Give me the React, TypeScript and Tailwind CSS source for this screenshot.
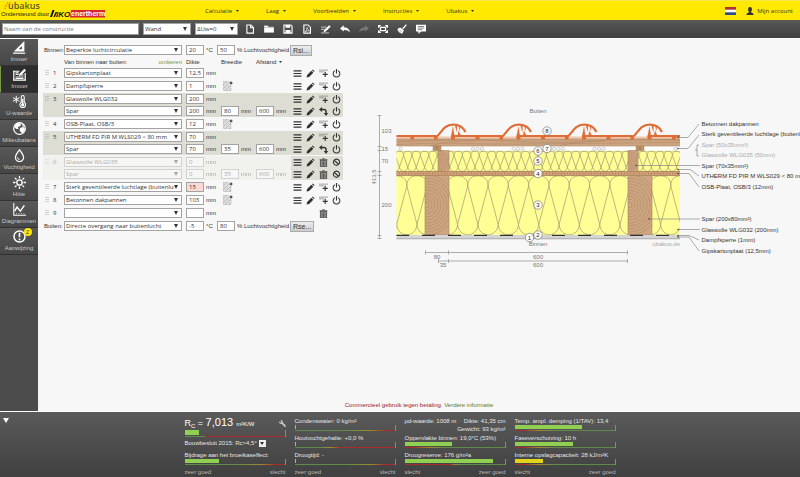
import type { ReactNode } from 'react'
import { FaWrench } from 'react-icons/fa'

type Row = {
  name: string
  thickness: string
  width?: string
  spacing?: string
  hatch?: boolean
  warn?: boolean
  tools: string[]
}

type Layer = { nr: number; rows: Row[]; inactive?: boolean }

const layerTools = ['menu', 'pencil', 'add', 'power']
const beamTools = ['menu', 'pencil', 'swap', 'power']
const offTools = ['menu', 'pencil', 'trash', 'ban']

const layers: Layer[] = [
  { nr: 1, rows: [{ name: 'Gipskartonplaat', thickness: '12,5', tools: layerTools }] },
  { nr: 2, rows: [{ name: 'Dampfsperre', thickness: '1', hatch: true, tools: layerTools }] },
  {
    nr: 3,
    rows: [
      { name: 'Glaswolle WLG032', thickness: '200', tools: layerTools },
      { name: 'Spar', thickness: '200', width: '80', spacing: '600', tools: beamTools },
    ],
  },
  { nr: 4, rows: [{ name: 'OSB-Plaat, OSB/3', thickness: '12', hatch: true, tools: layerTools }] },
  {
    nr: 5,
    rows: [
      { name: 'UTHERM FD PIR M WLS029 < 80 mm', thickness: '70', tools: layerTools },
      { name: 'Spar', thickness: '70', width: '35', spacing: '600', tools: beamTools },
    ],
  },
  {
    nr: 6,
    inactive: true,
    rows: [
      { name: 'Glaswolle WLG035', thickness: '0', tools: offTools },
      { name: 'Spar', thickness: '0', width: '35', spacing: '600', tools: offTools },
    ],
  },
  {
    nr: 7,
    rows: [{ name: 'Sterk geventileerde luchtlage (buitenlucht)', thickness: '15', hatch: true, warn: true, tools: layerTools }],
  },
  { nr: 8, rows: [{ name: 'Betonnen dakpannen', thickness: '103', hatch: true, tools: layerTools }] },
  { nr: 9, rows: [{ name: '', thickness: '', tools: ['', '', 'trash', ''] }] },
]

const icons: Record<string, ReactNode> = {
  menu: <path d="M1 3.5h14M1 8h14M1 12.5h14" stroke="currentColor" strokeWidth="2.2" />,
  pencil: <path d="M1 15l1-4.5L9.5 3l3.5 3.5L5.5 14zM10.5 2l1.500-1.300L15.300 4 14 5.500z" fill="currentColor" />,
  add: (
    <>
      <path d="M0 2h16M0 5h9" stroke="#888" strokeWidth="1.4" />
      <path d="M11 5v9M6.5 9.5h9" stroke="currentColor" strokeWidth="2" />
    </>
  ),
  power: (
    <>
      <path d="M5 3.2a6 6 0 1 0 6 0" fill="none" stroke="currentColor" strokeWidth="1.8" />
      <path d="M8 0v8" stroke="currentColor" strokeWidth="2" />
    </>
  ),
  swap: (
    <>
      <path d="M4 4.5h5q3.5 0 3.5 3.5v3" fill="none" stroke="currentColor" strokeWidth="2.6" />
      <path d="M0 4.5L5.5 0v9zM12.5 16L8.5 10.5h8z" fill="currentColor" />
    </>
  ),
  trash: (
    <>
      <path d="M2.5 4h11v11.5h-11z" fill="#aaa" stroke="currentColor" strokeWidth="1.4" />
      <path d="M1 3h14M6 1h4M5.5 6v8M8 6v8M10.5 6v8" stroke="currentColor" strokeWidth="1.2" />
    </>
  ),
  ban: <path d="M8 2a5.5 5.5 0 1 0 .01 0M4 4l8 7.5" fill="none" stroke="currentColor" strokeWidth="2" />,
  file: <path d="M3 1.5h6.5L13.5 5.5v9H3zM9 1.5V6h4.5" fill="none" stroke="currentColor" strokeWidth="1.8" />,
  folder: <path d="M0 2.5h6l1.5 2H16V14H0zM0 5.5h16" fill="currentColor" stroke="#555" strokeWidth=".5" />,
  save: (
    <>
      <path d="M1.5 1.5h11l2 2v11h-13z" fill="none" stroke="currentColor" strokeWidth="1.8" />
      <path d="M4 1.5h7.5V6H4zM4 9.5h8v5H4z" fill="currentColor" />
    </>
  ),
  pdf: (
    <>
      <path d="M3 1.5h6.5L13.5 5.5v9H3z" fill="none" stroke="currentColor" strokeWidth="1.8" />
      <path d="M5 12.5q3-3 3-7 1 4 4 5.5-4-.5-7 1.5z" fill="none" stroke="currentColor" />
    </>
  ),
  edit: (
    <>
      <path d="M0 5h9M0 8.5h6M0 14h13" stroke="#aaa" strokeWidth="2" />
      <path d="M4 13l1-3.5L13 2l2.5 2.5L7.5 12z" fill="currentColor" />
    </>
  ),
  undo: <path d="M0 7l6-5v3q8 0 10 8-4-4-10-3.5V12z" fill="currentColor" />,
  redo: <path d="M16 7l-6-5v3Q2 5 0 13q4-4 10-3.5V12z" fill="#777" />,
  fit: (
    <>
      <path d="M0 1.5h5L1.5 6H0zM16 1.5h-5L14.5 6H16zM0 14.5h5L1.5 10H0zM16 14.5h-5l3.5-4.5H16z" fill="currentColor" />
      <path d="M4 5.5h8v5H4z" fill="none" stroke="currentColor" strokeWidth="2" />
    </>
  ),
  brush: (
    <>
      <path d="M15 1L9 8" stroke="currentColor" strokeWidth="2" />
      <path d="M1 7.5L5 5.500l6 5-2.500 4.500H6l-1-2-1 1.500-1-3-1.500.5z" fill="currentColor" />
      <path d="M4 9.500l3 3" stroke="#555" />
    </>
  ),
  comment: (
    <>
      <path d="M0 1h16v11H8l-4 4v-4H0z" fill="currentColor" />
      <path d="M3 4h10M3 6.5h10M3 9h7" stroke="#555" strokeWidth="1.1" />
    </>
  ),
  user: <path d="M8 0q4 0 4 4.500Q12 8 10 9.500v1q5 1 5.500 5.500H.5Q1 11.500 6 10.500v-1Q4 8 4 4.500 4 0 8 0z" fill="currentColor" />,
  square: (
    <>
      <path d="M14 0v13H1z" fill="currentColor" />
      <path d="M11 6v4H7z" fill="#4c4c4c" />
      <path d="M0 15h15" stroke="currentColor" strokeWidth="1.5" />
    </>
  ),
  input: (
    <>
      <path d="M0 4h8M0 15h16M1 4v11M15 6v9" stroke="currentColor" strokeWidth="1.5" />
      <path d="M3 8h4M3 11h10M3 13h10M3 6h4M10 8.500h3" stroke="currentColor" strokeWidth="1.3" />
      <path d="M7 10l1-3 6-6 2 2-6 6z" fill="currentColor" />
    </>
  ),
  thermo: (
    <>
      <path d="M4 1v9M0 3.3l8 4.5M8 3.3l-8 4.5" stroke="currentColor" strokeWidth="1.2" />
      <path d="M10.2 9V2.5a1.8 1.8 0 0 1 3.6 0V9a3.5 3.5 0 1 1-3.6 0z" fill="none" stroke="currentColor" strokeWidth="1.3" />
      <path d="M12 5v7" stroke="currentColor" strokeWidth="1.6" />
      <circle cx="12" cy="12" r="2" fill="currentColor" />
    </>
  ),
  globe: (
    <>
      <circle cx="8" cy="8" r="7.2" fill="none" stroke="currentColor" strokeWidth="1.5" />
      <path d="M2 4l4-3 4 1-1 3-3 1 1 2-2 1-3-2zM9 7l4-1 2 3-3 5-2-1-2-3zM11 2l3 3-2 1z" fill="currentColor" />
    </>
  ),
  drop: (
    <>
      <path d="M8 1q5 6 5 9.5a5 5 0 0 1-10 0Q3 7 8 1z" fill="none" stroke="currentColor" strokeWidth="1.6" />
      <path d="M5.5 10.5q.5 2.5 2.5 2.5" fill="none" stroke="currentColor" strokeWidth="1.2" />
    </>
  ),
  sun: (
    <>
      <circle cx="8" cy="8" r="3.3" fill="none" stroke="currentColor" strokeWidth="1.7" />
      <path d="M8 0v3M8 13v3M0 8h3M13 8h3M2.3 2.3l2 2M11.7 11.7l2 2M2.3 13.7l2-2M11.7 4.3l2-2" stroke="currentColor" strokeWidth="1.6" />
    </>
  ),
  chart: (
    <>
      <path d="M1 0v15h15" fill="none" stroke="currentColor" strokeWidth="1.3" />
      <path d="M2 10l3-5 4 5 5-7" fill="none" stroke="currentColor" strokeWidth="1.8" />
      <path d="M4 13h11" stroke="currentColor" strokeDasharray="1 2" />
    </>
  ),
  alert: (
    <>
      <circle cx="8" cy="8" r="6.8" fill="none" stroke="currentColor" strokeWidth="1.8" />
      <path d="M8 3.5v5.5M8 10.5v2" stroke="currentColor" strokeWidth="2" />
    </>
  ),
}

function Icon({ name, className }: { name: string; className: string }) {
  return (
    <svg viewBox="0 0 16 16" className={className} aria-hidden="true">
      {icons[name]}
    </svg>
  )
}

function Caret({ className }: { className: string }) {
  return (
    <svg viewBox="0 0 10 8" className={className} aria-hidden="true" preserveAspectRatio="none">
      <path d="M0 0h10L5 8z" fill="currentColor" />
    </svg>
  )
}

function Select({ label, value, className }: { label: string; value: string; className: string }) {
  return (
    <div className={`relative ${className}`}>
      <select
        aria-label={label}
        className="block h-full w-full appearance-none border border-[#a3a3a3] bg-white pl-px pr-[7px] font-['Open_Sans',sans-serif] text-[6px] leading-[8px] text-[#333]"
      >
        <option>{value}</option>
      </select>
      <Caret className="pointer-events-none absolute right-1 top-1/2 h-[4px] w-[4px] -translate-y-1/2 text-[#333]" />
    </div>
  )
}

function NumberBox({ label, value, warn }: { label: string; value: string; warn?: boolean }) {
  return (
    <input
      aria-label={label}
      defaultValue={value}
      className={`block h-[10px] w-[18px] shrink-0 border border-[#a3a3a3] pl-[2px] font-['Open_Sans',sans-serif] text-[6px] leading-[8px] text-[#333] ${
        warn ? 'bg-[#fcd9d5]' : 'bg-white'
      }`}
    />
  )
}

function Measure({ label, value, warn }: { label: string; value: string; warn?: boolean }) {
  return (
    <div className="flex items-center gap-[2px]">
      <NumberBox label={label} value={value} warn={warn} />
      <span>mm</span>
    </div>
  )
}

function Hatch() {
  return (
    <button aria-label="Balken toevoegen" className="ml-[2px] block">
      <svg viewBox="0 0 10 10" className="h-[10px] w-[10px]">
        <rect x="0.5" y="0.5" width="7.5" height="9" fill="#ddd" stroke="#999" strokeWidth=".6" strokeDasharray="1 1" />
        <path d="M0 4l4-4M0 8l8-8M2 10l6-6M6 10l2-2" stroke="#aaa" strokeWidth=".6" />
        <rect x="6" y="0" width="4" height="4" fill="#f7f7f7" />
        <path d="M8 .5v3M6.5 2h3" stroke="#222" />
      </svg>
    </button>
  )
}

function LayerRow({ row, nr, first, inactive }: { row: Row; nr: number; first: boolean; inactive?: boolean }) {
  const fade = inactive ? 'opacity-40' : ''
  return (
    <div className="grid h-[12px] grid-cols-[21px_122px_35px_35px_35px_52px] items-center">
      <div className={`flex items-center gap-[4px] pl-[2px] ${fade}`}>
        {first && (
          <>
            <svg viewBox="0 0 4 6" className="h-[6px] w-[4px]">
              <path d="M1 0v6M3 0v6" stroke="#aaa" strokeDasharray="1 1" />
            </svg>
            <span className="font-['Open_Sans',sans-serif]">{nr}</span>
          </>
        )}
      </div>
      <Select label={`Materiaal laag ${nr}`} value={row.name} className={`h-[10px] w-[118px] ${fade}`} />
      <div className={fade}>
        <Measure label="Dikte" value={row.thickness} warn={row.warn} />
      </div>
      <div className={fade}>
        {row.width && <Measure label="Breedte" value={row.width} />}
        {row.hatch && <Hatch />}
      </div>
      <div className={fade}>{row.spacing && <Measure label="Afstand" value={row.spacing} />}</div>
      <div className={`grid h-full grid-cols-4 items-center justify-items-center ${inactive ? 'bg-[#dfded6]' : ''}`}>
        {row.tools.map((tool, i) =>
          tool ? (
            <button key={i} aria-label={tool}>
              <Icon name={tool} className="h-[9px] w-[9px]" />
            </button>
          ) : (
            <span key={i} />
          ),
        )}
      </div>
    </div>
  )
}

function ClimateRow({ label, value, temp, humidity, button }: Record<string, string>) {
  return (
    <div className="grid h-[12px] grid-cols-[21px_122px_31px_73px_auto] items-center">
      <span className="pl-px">{label}</span>
      <Select label={label} value={value} className="h-[10px] w-[118px]" />
      <div className="flex items-center gap-[2px]">
        <NumberBox label={`${label} temperatuur`} value={temp} />
        <span>°C</span>
      </div>
      <div className="flex items-center gap-[2px]">
        <NumberBox label={`${label} luchtvochtigheid`} value={humidity} />
        <span>% Luchtvochtigheid</span>
      </div>
      <button className="h-[11px] w-fit border border-[#aaa] bg-linear-to-b from-[#eee] to-[#ccc] px-[2px] text-[7px] leading-[9px]">
        {button}
      </button>
    </div>
  )
}

// Rounded top around each x, legs crossing over to the next bottom arc
function loops(from: number, to: number, step: number, top: number, bottom: number) {
  const r = step / 2
  const k = r * 1.35
  let d = ''
  for (let x = from; x <= to; x += step) {
    d += `M${x} ${bottom - r}L${x - r} ${top + r}C${x - r - 1} ${top + r - k} ${x + r + 1} ${top + r - k} ${x + r} ${top + r}`
    d += `L${x} ${bottom - r}C${x - 1} ${bottom - r + k} ${x - step + 1} ${bottom - r + k} ${x - step} ${bottom - r}`
  }
  return d
}

const callouts = [
  { text: 'Betonnen dakpannen', y: 124, line: 'M678 137.5H688L699 124' },
  { text: 'Sterk geventileerde luchtlage (buitenlucht)', y: 134, line: 'M678 148.5H688L699 135' },
  { text: 'Spar (50x35mm²)', y: 145, muted: true, line: 'M699 145h-2v11h2M697 150h-2' },
  { text: 'Glaswolle WLG035 (50mm)', y: 155, muted: true, line: '' },
  { text: 'Spar (70x35mm²)', y: 166, line: 'M636 165.5H700' },
  { text: 'UTHERM FD PIR M WLS029 < 80 mm', y: 176, line: 'M678 169.5H690L699 176' },
  { text: 'OSB-Plaat, OSB/3 (12mm)', y: 187, line: 'M678 173.5H689L699 187' },
  { text: 'Spar (200x80mm²)', y: 219, line: 'M649 219H700' },
  { text: 'Glaswolle WLG032 (200mm)', y: 230, line: 'M678 229.5H700' },
  { text: 'Dampfsperre (1mm)', y: 240, line: 'M678 235.5H689L699 240' },
  { text: 'Gipskartonplaat (12,5mm)', y: 251, line: 'M678 237H689L699 251' },
]

const markers = [
  [529.5, 237.5, 1],
  [538, 235, 2],
  [538, 205, 3],
  [538, 173.5, 4],
  [538, 161, 5],
  [538, 151, 6],
  [547, 148.5, 7],
  [547, 131, 8],
]

function CrossSection() {
  return (
    <svg viewBox="365 95 435 180" className="block h-[180px] w-[435px] shrink-0 font-['Liberation_Sans',Arial,sans-serif] text-[6px]" fill="none">
      <defs>
        <clipPath id="section">
          <rect x="396.5" y="110" width="283.5" height="135" />
        </clipPath>
        <clipPath id="beams">
          <path d="M425 175.5h24V235h-24zM438 150.5h11V171.5h-11zM628 175.5h24V235h-24zM628 150.5h10V171.5h-10z" />
        </clipPath>
      </defs>
      <g clipPath="url(#section)">
        <rect x="396" y="146" width="285" height="5.5" fill="#fff" />
        <rect x="396" y="151" width="285" height="20.5" fill="#ffff96" />
        <rect x="396" y="175.5" width="285" height="59.5" fill="#ffff96" />
        <path d={loops(391, 690, 8.4, 151.3, 171.3)} stroke="#aaa573" strokeWidth=".8" />
        <path d={loops(396.7, 702, 20.3, 175.8, 234.6)} stroke="#aaa573" strokeWidth=".8" />
        <path d="M396 151.3h285" stroke="#b9b578" strokeWidth=".6" />

        {/* osb */}
        <rect x="396" y="171.5" width="285" height="4.2" fill="#d0a078" />
        <path d="M396 171.5h285M396 175.6h285" stroke="#a1764e" strokeWidth=".7" />
        <path d="M396 173.5h285" stroke="#b5855c" strokeWidth="2" strokeDasharray="1 2" />

        {/* beams */}
        <path d="M425 175.5h24V235h-24zM438 150.5h11V171.5h-11zM628 175.5h24V235h-24zM628 150.5h10V171.5h-10z" fill="#cda581" stroke="#a9825e" strokeWidth=".6" />
        <g clipPath="url(#beams)" stroke="#b18a67" strokeWidth=".6">
          {[3, 6, 9, 12, 15, 18, 21, 24, 27, 30].map((r) => (
            <g key={r}>
              <circle cx="426" cy="205" r={r} />
              <circle cx="629" cy="205" r={r} />
            </g>
          ))}
          {[1.5, 3.5, 5.5, 7.5, 9.5].map((r) => (
            <g key={r}>
              <circle cx="440" cy="161" r={r} />
              <circle cx="629" cy="161" r={r} />
            </g>
          ))}
        </g>

        {/* batten */}
        <rect x="396" y="138" width="285" height="8" fill="#cda581" />
        <path d="M396 142q60-4 110-1t90 0 85-1M396 144.5q40-2 70-1t110 0 110-1M430 146q20-6 45-5M560 146q20-6 45-5M396 140h285" stroke="#b18a67" strokeWidth=".6" />
        <path d="M396 146h285" stroke="#a9876a" strokeWidth=".6" />
        <path d="M433 146h8v4.5h-8zM636 146h8v4.5h-8z" fill="#c39668" stroke="#a07c5c" strokeWidth=".5" />
        <circle cx="437" cy="148.5" r="1.3" stroke="#8a6440" strokeWidth=".5" />
        <circle cx="640" cy="148.5" r="1.3" stroke="#8a6440" strokeWidth=".5" />
        {[400.5, 473, 477.5, 482, 513.5, 518, 522.5, 554, 558.5, 563, 594.5, 599, 603.5, 675.5].map((x) => (
          <circle key={x} cx={x} cy="148.8" r="1.6" stroke="#aaa" strokeWidth=".6" />
        ))}

        {/* vapour barrier and plasterboard */}
        <rect x="396" y="235" width="285" height="4" fill="#d3d3d3" />
        <path d="M396 238.8h285" stroke="#999" strokeWidth=".7" />
        <path d="M396 235.4h285" stroke="#333" strokeWidth="1.2" strokeDasharray="13 13" />

        {/* roof tiles */}
        <rect x="396" y="136.5" width="285" height="2" fill="#f3c6ad" />
        <g stroke="#df6c34">
          <path d="M396 136H436" strokeWidth="2" />
          <path d="M410.5 137.5h3.5" strokeWidth="4" />
          {[436, 501.5, 567, 632.5].map((x) => (
            <g key={x}>
              <path d={`M${x - 2} 137.5h3.500`} strokeWidth="4" />
              <path d={`M${x} 137C${x + 5} 134 ${x + 7} 125 ${x + 17} 124.5Q${x + 26} 124.5 ${x + 29.5} 132`} strokeWidth="2.2" />
              <path d={`M${x + 16} 136H${x + 65.5}`} strokeWidth="2" />
              <path d={`M${x + 15} 137.5h4M${x + 39.5} 137.5h4`} strokeWidth="4" />
              <path
                d={`M${x + 15} 137l2-10 1.500 10zM${x + 19} 125.500h2l-.2 6zM${x + 23} 126h1.500l-.8 4.500zM${x + 21.5} 136l1-5 2.500 5z`}
                fill="#df6c34"
                strokeWidth=".3"
              />
            </g>
          ))}
        </g>
      </g>

      {/* dimension lines */}
      <g stroke="#999" strokeWidth=".8">
        <path d="M379.5 115.5V239M377.5 115.5h4M377.5 146.5h4M377.5 150.5h4M377.5 171.5h4M377.5 175.5h4M377.5 235.5h4M377.5 238.5h4" />
        <path d="M425 252.5H628M425.5 250.5v4M448.5 250.5v4M627.5 250.5v4M438 261H628M438.5 259v4M448.5 259v4M627.5 259v4" />
      </g>
      <g fill="#777">
        <text x="381.5" y="133">103</text>
        <text x="381.5" y="151">15</text>
        <text x="381.5" y="163">70</text>
        <text x="381.5" y="207">200</text>
        <text transform="translate(376 177) rotate(-90)" textAnchor="middle">413,5</text>
        <text x="437" y="259" textAnchor="middle">80</text>
        <text x="538" y="259" textAnchor="middle">600</text>
        <text x="443" y="267" textAnchor="middle">35</text>
        <text x="538" y="267" textAnchor="middle">600</text>
        <text x="538" y="113" textAnchor="middle">Buiten</text>
        <text x="538" y="246" textAnchor="middle">Binnen</text>
        <text x="680" y="246" textAnchor="end" fill="#aaa">ubakus.de</text>
      </g>

      {markers.map(([x, y, nr]) => (
        <g key={nr}>
          <circle cx={x} cy={y} r="4.2" fill="#fff" stroke="#777" strokeWidth=".7" />
          <text x={x} y={y + 2} textAnchor="middle" fill="#222">{nr}</text>
        </g>
      ))}

      {callouts.map((c) => (
        <g key={c.text}>
          <path d={c.line} stroke="#888" strokeWidth=".7" />
          {c.line && !c.muted && <circle cx={c.line.slice(1, 4)} cy={c.line.match(/ ([\d.]+)/)?.[1]} r=".8" fill="#444" />}
          <text x="701.5" y={c.y + 2} fill={c.muted ? '#aaa' : '#333'}>{c.text}</text>
        </g>
      ))}
    </svg>
  )
}

const tracks = {
  good: 'bg-linear-to-r from-[#5f8a48] from-50% via-[#a08a2c] via-75% to-[#a82c2c] to-90%',
  early: 'bg-linear-to-r from-[#5f8a48] from-25% via-[#a08a2c] via-35% to-[#a82c2c] to-45%',
  bad: 'bg-linear-to-r from-[#a82c2c] from-10% via-[#a08a2c] via-25% to-[#5f8a48] to-40%',
  badLong: 'bg-linear-to-r from-[#a82c2c] from-45% via-[#a08a2c] via-50% to-[#5f8a48] to-55%',
}

type MeterProps = { label: string; value: number; color?: string; track?: keyof typeof tracks }

function Meter({ label, value, color = 'bg-[#8fd053]', track = 'good' }: MeterProps) {
  return (
    <div className="mb-[3px]">
      <div className="h-[8px] whitespace-nowrap leading-[8px]">{label}</div>
      <div className="flex h-[6px] flex-col justify-end border-r border-[#888]">
        <div className={`h-[4px] ${color}`} style={{ width: `${value}%` }} />
        <div className={`mt-px h-px ${tracks[track]}`} />
      </div>
    </div>
  )
}

function Scale({ left, right }: { left: string; right: string }) {
  return (
    <div className="flex justify-between leading-[8px] text-[#b5b5b5]">
      <span>{left}</span>
      <span>{right}</span>
    </div>
  )
}

const menu = ['Calculatie', 'Laag', 'Voorbeelden', 'Instructies', 'Ubakus']
const toolbar = ['file', 'folder', 'save', 'pdf', 'edit', 'undo', 'redo', 'fit', 'brush', 'comment']
const sidebar = [
  { icon: 'square', label: 'Invoer' },
  { icon: 'input', label: 'Invoer', active: true },
  { icon: 'thermo', label: 'U-waarde' },
  { icon: 'globe', label: 'Milieubalans' },
  { icon: 'drop', label: 'Vochtigheid' },
  { icon: 'sun', label: 'Hitte' },
  { icon: 'chart', label: 'Diagrammen' },
  { icon: 'alert', label: 'Aanwijzing', badge: '2' },
]

export default function App() {
  return (
    <div className="flex min-h-screen flex-col overflow-hidden bg-[#f7f7f7] font-['Liberation_Sans',Arial,sans-serif] text-[6px] leading-[8px] text-[#333]">
      <header className="flex h-[20px] items-center border-t border-[#f3e84a] bg-[#ffe900] font-['Open_Sans',sans-serif]">
        <a href="#home" className="block w-[205px] shrink-0" aria-label="ubakus">
          <svg viewBox="0 0 110 20" className="block h-[20px] w-[110px]">
            <path d="M5 4l2 1.500M7 1.500l1.200 2M10 1l-.5 2M4 7l2 .5" stroke="#f08a1c" strokeWidth="1.2" />
            <text x="8" y="8" fill="#5c5a35" className="font-['Open_Sans',sans-serif] text-[9px] font-semibold">ubakus</text>
            <text x="1" y="15" fill="#222" className="font-['Liberation_Sans',sans-serif] text-[6px]">Ondersteund door</text>
            <path d="M50 16l2.5-7h2L52 16zM53.5 16l2-5H57l-2 5z" fill="#111" />
            <text x="56" y="15.5" fill="#111" className="font-['Liberation_Sans',sans-serif] text-[8px] font-bold italic">IKO</text>
            <path d="M71 9h34v7.5H70z" fill="#d9262e" />
            <text x="71" y="15" fill="#fff" className="font-['Liberation_Sans',sans-serif] text-[7px] font-bold">enertherm</text>
          </svg>
        </a>
        <nav className="flex flex-1 gap-[27px]">
          {menu.map((item) => (
            <a key={item} href={`#${item}`} className="flex items-center gap-1">
              {item}
              <Caret className="h-[2px] w-[3px]" />
            </a>
          ))}
        </nav>
        <button aria-label="Nederlands" className="mr-[10px]">
          <svg viewBox="0 0 11 8" className="block h-[8px] w-[11px]">
            <path d="M0 0h11v8H0z" fill="#fff" />
            <path d="M0 0h11v2.7H0z" fill="#b3303a" />
            <path d="M0 5.3h11V8H0z" fill="#2d4a8d" />
          </svg>
        </button>
        <a href="#account" className="mr-[7px] flex items-center gap-[3px]">
          <Icon name="user" className="h-[8px] w-[8px]" />
          Mijn account
        </a>
      </header>

      <div className="flex h-[19px] items-center border-b border-white bg-linear-to-b from-[#585858] to-[#404040] pl-[2px]">
        <input
          aria-label="Naam van de constructie"
          placeholder="Naam van de constructie"
          className="h-[12px] w-[137px] border border-[#999] bg-white pl-px font-['Open_Sans',sans-serif] text-[6px] placeholder:text-[#777]"
        />
        <Select label="Type" value="Wand" className="ml-1 h-[12px] w-[48px]" />
        <Select label="Correctie" value="ΔUw=0" className="ml-1 h-[12px] w-[43px]" />
        <div className="ml-[2px] flex items-center text-white">
          {toolbar.map((name) => (
            <button key={name} aria-label={name} className="flex w-[19px] justify-center">
              <Icon name={name} className="h-[10px] w-[10px]" />
            </button>
          ))}
        </div>
      </div>

      <div className="flex flex-1">
        <aside className="w-[38px] shrink-0 bg-[#4c4c4c] text-[#c8c8c8]">
          {sidebar.map((item, i) => (
            <a
              key={i}
              href={`#page-${i}`}
              className={`flex h-[27px] flex-col items-center justify-between border-b border-b-[#333] pb-[2px] pt-[2px] ${
                item.active ? 'border-l border-l-[#7a9a4a] bg-[#2e2e2e]' : 'bg-linear-to-b from-[#585858] to-[#474747]'
              }`}
            >
              <span className="relative">
                <Icon name={item.icon} className="h-[13px] w-[13px] text-white" />
                {item.badge && (
                  <span className="absolute -right-[6px] -top-[2px] h-[8px] w-[8px] rounded-full bg-[#ffe900] text-center text-[#444]">
                    {item.badge}
                  </span>
                )}
              </span>
              <span>{item.label}</span>
            </a>
          ))}
        </aside>

        <main className="flex min-w-0 flex-1 flex-col overflow-hidden">
          <div className="flex flex-1">
            <section className="w-[327px] shrink-0 whitespace-nowrap pl-[5px] pt-[5px]">
              <ClimateRow label="Binnen:" value="Beperkte luchtcirculatie" temp="20" humidity="50" button="Rsi..." />
              <div className="grid h-[11px] grid-cols-[21px_122px_35px_35px_35px] items-center">
                <span />
                <div className="flex w-[118px] justify-between">
                  <span>Van binnen naar buiten:</span>
                  <a href="#omkeren" className="text-[#7b9440]">omkeren</a>
                </div>
                <span>Dikte</span>
                <span>Breedte</span>
                <span className="flex items-center gap-[3px]">
                  Afstand <Caret className="h-[2px] w-[3px]" />
                </span>
              </div>
              <div className="flex flex-col gap-px">
                {layers.map((layer) => (
                  <div
                    key={layer.nr}
                    className={`w-[300px] ${layer.inactive ? 'bg-[#f1f1ee]' : layer.rows.length > 1 ? 'bg-[#deddd4]' : ''}`}
                  >
                    {layer.rows.map((row, i) => (
                      <LayerRow key={i} row={row} nr={layer.nr} first={i === 0} inactive={layer.inactive} />
                    ))}
                  </div>
                ))}
                <ClimateRow label="Buiten:" value="Directe overgang naar buitenlucht" temp="-5" humidity="80" button="Rse..." />
              </div>
            </section>
            <section className="min-w-0 flex-1 pt-[56px]">
              <CrossSection />
            </section>
          </div>
          <p className="pb-[2px] text-center">
            <span className="text-[#a02020]">Commercieel gebruik tegen betaling.</span>{' '}
            <a href="#info" className="text-[#5a7a2a]">Verdere informatie</a>
          </p>
        </main>
      </div>

      <footer className="relative flex h-[66px] justify-center gap-[9px] border-t border-white bg-linear-to-b from-[#5a5a5a] to-[#404040] pt-[5px] text-[#e6e6e6]">
        <button aria-label="Inklappen" className="absolute left-[3px] top-[6px]">
          <Caret className="h-[5px] w-[6px] text-white" />
        </button>
        <div className="w-[101px]">
          <div className="flex h-[13px] items-center justify-between">
            <span className="whitespace-nowrap text-[11px] leading-[13px] text-white">
              <span className="text-[9px]">R<sub className="text-[6px]">C</sub> = </span>
              7,013 <span className="text-[6px]">m²K/W</span>
            </span>
            <FaWrench className="h-[7px] w-[7px] -scale-x-100 text-[#ccc]" />
          </div>
          <div className="mb-[2px] flex h-[7px] flex-col justify-end border-r border-[#888]">
            <div className="h-[5px] w-[14px] bg-[#8fd053]" />
            <div className="mt-px h-px bg-linear-to-r from-[#5f8a48] from-20% to-[#a82c2c] to-20%" />
          </div>
          <div className="mb-[4px] flex h-[8px] items-center gap-[2px] whitespace-nowrap">
            Bouwbesluit 2015: Rc&gt;4,5°
            <button aria-label="Norm kiezen" className="flex h-[7px] w-[7px] items-center justify-center bg-[#eee]">
              <Caret className="h-[3px] w-[4px] text-[#333]" />
            </button>
          </div>
          <Meter label="Bijdrage aan het broeikaseffect:" value={34} />
          <Scale left="zeer goed" right="slecht" />
        </div>
        <div className="w-[101px]">
          <Meter label="Condenswater: 0 kg/m²" value={1} />
          <Meter label="Houtvochtgehalte: +0,0 %" value={1} track="early" />
          <Meter label="Droogtijd: -" value={1} />
          <Scale left="zeer goed" right="slecht" />
        </div>
        <div className="w-[101px]">
          <div className="flex h-[17px] justify-between whitespace-nowrap">
            <span>µd-waarde: 1008 m</span>
            <span className="text-right">
              Dikte: 41,35 cm
              <br />
              Gewicht: 93 kg/m²
            </span>
          </div>
          <Meter label="Oppervlakte binnen: 19,0°C (53%)" value={47} track="bad" />
          <Meter label="Droogreserve: 176 g/m²a" value={88} track="badLong" />
          <Scale left="slecht" right="zeer goed" />
        </div>
        <div className="w-[101px]">
          <Meter label="Temp. ampl. demping (1/TAV): 13,4" value={67} track="bad" />
          <Meter label="Faseverschuiving: 10 h" value={58} track="bad" />
          <Meter label="Interne opslagcapaciteit: 28 kJ/m²K" value={28} color="bg-[#e3d31c]" track="bad" />
          <Scale left="slecht" right="zeer goed" />
        </div>
      </footer>
    </div>
  )
}
